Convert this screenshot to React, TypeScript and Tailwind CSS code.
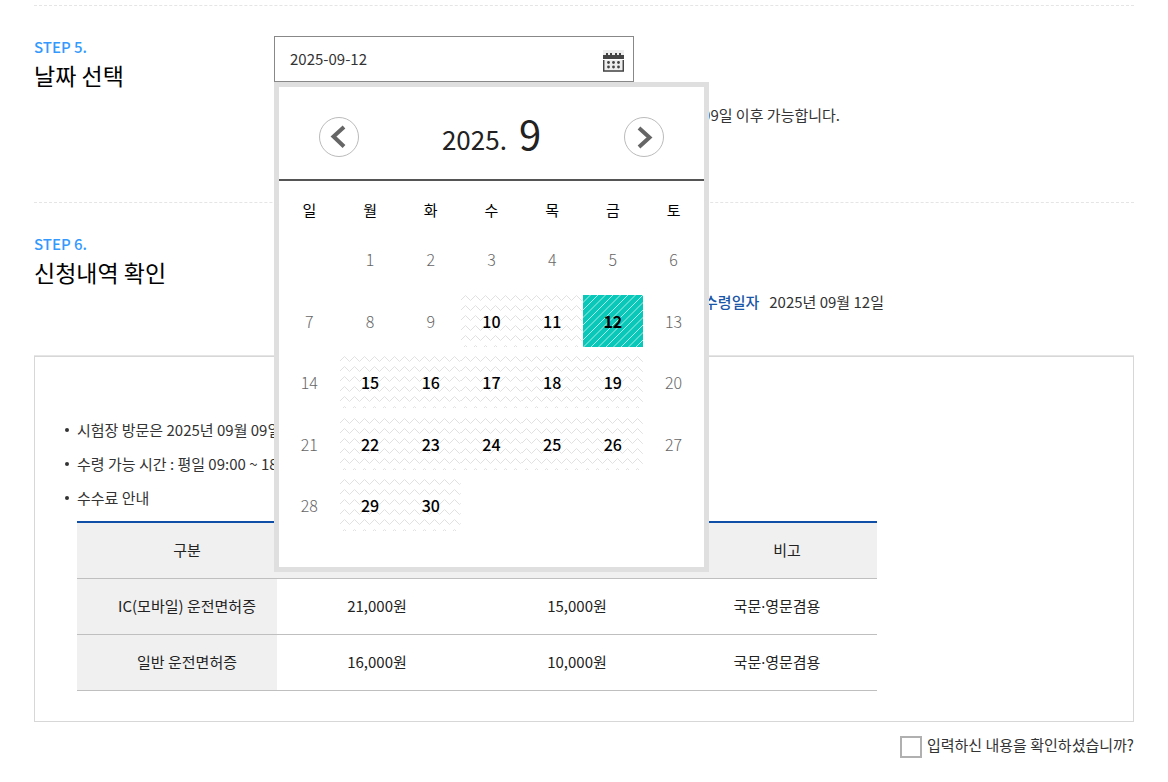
import React, { useState } from 'react';
import clsx from 'clsx';

const WEEKDAYS = ['일', '월', '화', '수', '목', '금', '토'];

// September 2025 starts on a Monday
const WEEKS: (number | null)[][] = [
  [null, 1, 2, 3, 4, 5, 6],
  [7, 8, 9, 10, 11, 12, 13],
  [14, 15, 16, 17, 18, 19, 20],
  [21, 22, 23, 24, 25, 26, 27],
  [28, 29, 30, null, null, null, null],
];

const FIRST_OPEN_DAY = 10;

const FEES = [
  { kind: 'IC(모바일) 운전면허증', price: '21,000원', discount: '15,000원', languages: ['국문', '영문겸용'] },
  { kind: '일반 운전면허증', price: '16,000원', discount: '10,000원', languages: ['국문', '영문겸용'] },
];

const NOTICES = [
  '시험장 방문은 2025년 09월 09일 이후 가능합니다.',
  '수령 가능 시간 : 평일 09:00 ~ 18:00',
  '수수료 안내',
];

const CalendarIcon = () => (
  <svg width="21" height="22" viewBox="0 0 21 22" aria-hidden="true">
    <rect width="21" height="22" fill="#eeeeee" />
    <path d="M3 3h2v2H3zM7 3h2v2H7zM12 3h2v2h-2zM16 3h2v2h-2z" fill="#444" />
    <rect y="5" width="21" height="4" fill="#444" />
    <rect y="9" width="21" height="1" fill="#fff" />
    <path d="M.7 10v11h19.6V10" fill="none" stroke="#444" strokeWidth="1.5" />
    <g fill="#444">
      {[12.5, 17].map((y) =>
        [5.5, 10.5, 15.5].map((x) => <circle key={`${x}-${y}`} cx={x} cy={y} r="1.4" />)
      )}
    </g>
  </svg>
);

const ZigzagFill = () => (
  <svg className="absolute inset-0 h-full w-full" aria-hidden="true">
    <defs>
      <pattern id="zigzag" width="10" height="10" patternUnits="userSpaceOnUse">
        <path d="M-.5 5.5 4.5.5 9.5 5.5 10.5 4.5" fill="none" stroke="#dedede" strokeWidth="0.9" />
      </pattern>
    </defs>
    <rect width="100%" height="100%" fill="url(#zigzag)" />
  </svg>
);

const StripeFill = () => (
  <svg className="absolute inset-0 h-full w-full" aria-hidden="true">
    <defs>
      <pattern id="stripes" width="15" height="15" patternUnits="userSpaceOnUse">
        <path d="M-1 16 16-1M-1 8.5 8.5-1M6.5 16 16 6.5M-1 1 1-1M14 16 16 14" stroke="#d5f5f2" strokeWidth="0.8" />
      </pattern>
    </defs>
    <rect width="100%" height="100%" fill="#0ac8b9" />
    <rect width="100%" height="100%" fill="url(#stripes)" />
  </svg>
);

interface DayButtonProps {
  day: number;
  open: boolean;
  selected: boolean;
  onSelect: (day: number) => void;
}

const DayButton: React.FC<DayButtonProps> = ({ day, open, selected, onSelect }) => (
  <button
    type="button"
    disabled={!open}
    aria-pressed={selected}
    onClick={() => onSelect(day)}
    className={clsx(
      'relative block h-[52px] w-full text-base',
      open ? 'text-black' : 'font-light text-[#666]',
      open && (selected ? 'font-bold' : 'font-medium')
    )}
  >
    {open && (selected ? <StripeFill /> : <ZigzagFill />)}
    <span className="relative">{day}</span>
  </button>
);

interface CalendarProps {
  selected: number;
  onSelect: (day: number) => void;
}

const Calendar: React.FC<CalendarProps> = ({ selected, onSelect }) => {
  const isOpen = (day: number, weekday: number) =>
    day >= FIRST_OPEN_DAY && weekday !== 0 && weekday !== 6;

  return (
    <div className="absolute top-full left-0 z-10 w-[435px] border-5 border-[#dfdfdf] bg-white pb-[26px]">
      <div className="flex h-[94px] items-start justify-between border-b-2 border-[#555] px-10 pt-[30px]">
        <button type="button" aria-label="이전 달" className="h-10 w-10 rounded-full border border-[#bbb]">
          <svg viewBox="1 1 38 38" className="h-full w-full" fill="none" stroke="#666" strokeWidth="4">
            <path d="M25 10 14.5 19.5 25 29.5" />
          </svg>
        </button>
        <div className="flex items-baseline gap-3 leading-8 text-[#222]">
          <span className="text-[26px]">2025.</span>
          <span className="text-[40px]">9</span>
        </div>
        <button type="button" aria-label="다음 달" className="h-10 w-10 rounded-full border border-[#bbb]">
          <svg viewBox="1 1 38 38" className="h-full w-full" fill="none" stroke="#666" strokeWidth="4">
            <path d="M15 11 25.5 20.5 15 30" />
          </svg>
        </button>
      </div>
      <table className="h-[360px] w-full table-fixed text-center">
        <thead>
          <tr className="h-[52px]">
            {WEEKDAYS.map((name) => (
              <th key={name} scope="col" className="pt-[6px] font-normal text-black">
                {name}
              </th>
            ))}
          </tr>
        </thead>
        <tbody>
          {WEEKS.map((week, row) => (
            <tr key={row}>
              {week.map((day, col) => (
                <td key={col} className="p-0 align-top">
                  {day && (
                    <DayButton
                      day={day}
                      open={isOpen(day, col)}
                      selected={day === selected}
                      onSelect={onSelect}
                    />
                  )}
                </td>
              ))}
            </tr>
          ))}
        </tbody>
      </table>
    </div>
  );
};

const StepTitle = ({ step, title }: { step: string; title: string }) => (
  <header className="w-60 shrink-0">
    <p className="leading-[22px] font-medium text-[#3399ff]">{step}</p>
    <h2 className="text-[23px] leading-[34px] text-black">{title}</h2>
  </header>
);

const App: React.FC = () => {
  const [day, setDay] = useState(12);
  const [checked, setChecked] = useState(false);
  const dd = String(day).padStart(2, '0');

  return (
    <main className="bg-white px-[34px] pt-[5px] pb-6 font-['Noto_Sans_CJK_KR',sans-serif] text-[15px] leading-[22px] text-[#333]">
      <section className="flex min-h-[197px] border-t border-dashed border-[#e5e5e5] pt-[30px]">
        <StepTitle step="STEP 5." title="날짜 선택" />
        <div className="grow">
          <div className="relative w-[360px]">
            <div className="flex h-[46px] items-center border border-[#888] bg-white pr-[9px]">
              <input
                type="text"
                readOnly
                aria-label="수령 날짜"
                value={`2025-09-${dd}`}
                className="h-full min-w-0 grow pb-[2px] pl-[15px] outline-none"
              />
              <button type="button" aria-label="달력 열기" className="pt-1">
                <CalendarIcon />
              </button>
            </div>
            <Calendar selected={day} onSelect={setDay} />
          </div>
          <p className="mt-[22px] w-[566px] text-right">시험장 방문은 2025년 09월 09일 이후 가능합니다.</p>
        </div>
      </section>

      <section className="flex min-h-[154px] border-t border-b border-[#e5e5e5] pt-[30px] [border-top-style:dashed]">
        <StepTitle step="STEP 6." title="신청내역 확인" />
        <dl className="mt-[58px] flex w-[610px] justify-end gap-[10px]">
          <dt className="font-medium text-[#1a56a8]">수령일자</dt>
          <dd>2025년 09월 {dd}일</dd>
        </dl>
      </section>

      <section className="border border-[#d7d7d7] px-[30px] pt-14 pb-[30px]">
        <ul className="leading-[34px]">
          {NOTICES.map((text) => (
            <li key={text} className="flex items-center gap-2">
              <span className="h-1 w-1 rounded-full bg-[#333]" />
              {text}
            </li>
          ))}
        </ul>
        <table className="mt-[6px] ml-3 w-[800px] table-fixed border-t-2 border-[#0f4fa8] text-center text-[#222]">
          <thead>
            <tr className="h-14 border-b border-[#bfbfbf] bg-[#f0f0f0]">
              <th scope="col" className="pl-5 font-normal">구분</th>
              <th scope="col" className="pl-5 font-normal">수수료</th>
              <th scope="col" className="pl-5 font-normal">감면</th>
              <th scope="col" className="pl-5 font-normal">비고</th>
            </tr>
          </thead>
          <tbody>
            {FEES.map((fee) => (
              <tr key={fee.kind} className="h-14 border-b border-[#bfbfbf]">
                <th scope="row" className="bg-[#f0f0f0] pl-5 font-normal">{fee.kind}</th>
                <td>{fee.price}</td>
                <td>{fee.discount}</td>
                <td>
                  {fee.languages[0]}
                  <span className="font-['Noto_Sans']">·</span>
                  {fee.languages[1]}
                </td>
              </tr>
            ))}
          </tbody>
        </table>
      </section>

      <label className="mt-[14px] flex items-start justify-end gap-[5px] leading-[18px]">
        <input
          type="checkbox"
          checked={checked}
          onChange={(e) => setChecked(e.target.checked)}
          className="h-[22px] w-[22px] appearance-none border-2 border-[#b0b0b0] bg-white checked:bg-[#3399ff]"
        />
        입력하신 내용을 확인하셨습니까?
      </label>
    </main>
  );
};

export default App;
